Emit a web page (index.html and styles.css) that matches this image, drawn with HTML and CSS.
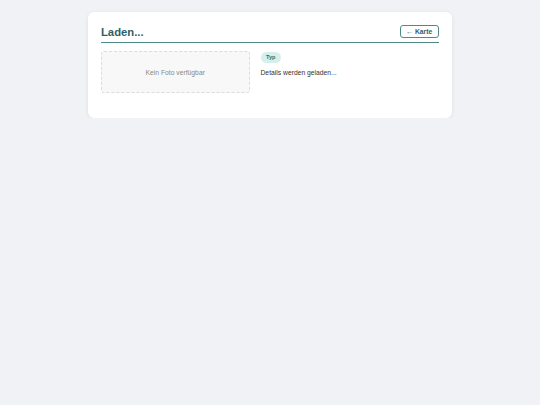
FILE: index.html
```html
<!DOCTYPE html>
<html lang="de">
<head>
<meta charset="utf-8">
<link rel="stylesheet" href="styles.css">
</head>
<body>
<div class="card">
  <div class="header">
    <h1 class="title">Laden...</h1>
    <button class="back">← Karte</button>
  </div>
  <div class="content">
    <div class="photo">Kein Foto verfügbar</div>
    <div class="info">
      <span class="badge">Typ</span>
      <p class="details">Details werden geladen...</p>
    </div>
  </div>
</div>
</body>
</html>
```
FILE: styles.css
```css
html, body { margin: 0; padding: 0; }
body {
  background: #f0f2f5;
  font-family: "Liberation Sans", Arial, sans-serif;
  padding-top: 12px;
}
.card {
  width: 338px;
  margin: 0 auto;
  background: #fff;
  border-radius: 6px;
  padding: 13px 13px 25px;
  box-shadow: 0 1px 4px rgba(0,0,0,0.08);
}
.header {
  display: flex;
  justify-content: space-between;
  align-items: center;
  border-bottom: 1.5px solid #4f8a8b;
  padding-bottom: 2.5px;
}
.title {
  margin: 0;
  font-size: 11.25px;
  font-weight: bold;
  color: #2d5f67;
  line-height: 14px;
}
.back {
  font-family: inherit;
  font-size: 6.75px;
  font-weight: bold;
  color: #2d5f67;
  background: #fff;
  border: 1px solid #4f8a8b;
  border-radius: 3px;
  padding: 0;
  width: 39.5px;
  height: 13px;
  line-height: 11px;
  margin-bottom: 1px;
}
.content {
  display: flex;
  gap: 11px;
  margin-top: 8.5px;
}
.photo {
  width: 146.5px;
  height: 40px;
  border: 0.75px dashed #dcdcdc;
  border-radius: 3px;
  background: #f8f8f8;
  display: flex;
  align-items: center;
  justify-content: center;
  font-size: 6.75px;
  color: #888;
  flex-shrink: 0;
}
.info {
  flex: 1;
  display: flex;
  flex-direction: column;
  align-items: flex-start;
  padding-top: 0.5px;
}
.badge {
  display: block;
  background: #d6efeb;
  color: #2a7268;
  font-size: 5.6px;
  font-weight: bold;
  padding: 0 5.5px;
  height: 11px;
  line-height: 11px;
  border-radius: 6px;
}
.details {
  margin: 6px 0 0;
  font-size: 6.75px;
  line-height: 8px;
  color: #333;
}
```
